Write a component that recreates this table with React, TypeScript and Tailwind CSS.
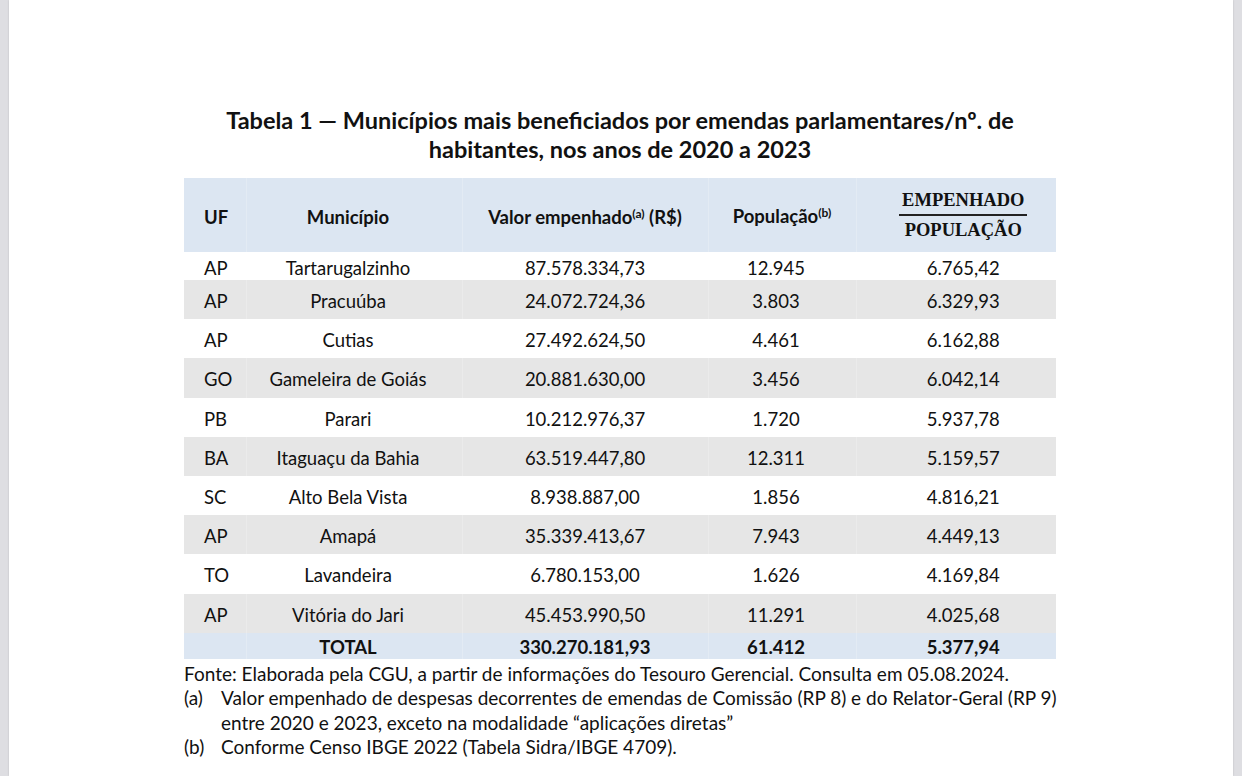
import React from "react";

const rows = [
  ["AP", "Tartarugalzinho", "87.578.334,73", "12.945", "6.765,42"],
  ["AP", "Pracuúba", "24.072.724,36", "3.803", "6.329,93"],
  ["AP", "Cutias", "27.492.624,50", "4.461", "6.162,88"],
  ["GO", "Gameleira de Goiás", "20.881.630,00", "3.456", "6.042,14"],
  ["PB", "Parari", "10.212.976,37", "1.720", "5.937,78"],
  ["BA", "Itaguaçu da Bahia", "63.519.447,80", "12.311", "5.159,57"],
  ["SC", "Alto Bela Vista", "8.938.887,00", "1.856", "4.816,21"],
  ["AP", "Amapá", "35.339.413,67", "7.943", "4.449,13"],
  ["TO", "Lavandeira", "6.780.153,00", "1.626", "4.169,84"],
  ["AP", "Vitória do Jari", "45.453.990,50", "11.291", "4.025,68"],
];

export default function App() {
  return (
    <div
      className="flex h-[776px] w-full bg-[#dedee2] px-[9px] text-[#111]"
      style={{ fontFamily: "Lato, 'Open Sans', sans-serif" }}
    >
      <div className="flex flex-1 flex-col bg-white pl-[175px] pt-[106px] shadow-[0_0_2px_rgba(0,0,0,0.15)]">
        <div className="flex w-[872px] flex-col">
          <h1 className="-mx-[20px] text-center text-[23.5px] font-bold leading-[29px]">
            Tabela 1 — Municípios mais beneficiados por emendas parlamentares/nº. de
            <br />
            habitantes, nos anos de 2020 a 2023
          </h1>
          <table className="mt-[14px] w-[872px] table-fixed border-collapse text-[18.5px] leading-[22px]">
            <colgroup>
              <col className="w-[62px]" />
              <col className="w-[216px]" />
              <col className="w-[246px]" />
              <col className="w-[148px]" />
              <col className="w-[200px]" />
            </colgroup>
            <thead>
              <tr className="h-[74px] bg-[#dce6f2]">
                <th className="pl-[20px] pt-[3px] text-left font-bold">UF</th>
                <th className="border-l border-white/20 pr-[12px] pt-[3px] text-center font-bold">Município</th>
                <th className="border-l border-white/20 pt-[3px] text-center font-bold">
                  Valor empenhado<sup className="text-[12px]">(a)</sup> (R$)
                </th>
                <th className="border-l border-white/20 pt-[1px] text-center align-middle font-bold">
                  População<sup className="text-[12px]">(b)</sup>
                </th>
                <th className="border-l border-white/20 pl-[14px]">
                  <div
                    className="mx-auto flex w-[128px] flex-col items-center text-[18.5px] font-bold"
                    style={{ fontFamily: "'Liberation Serif', 'DejaVu Serif', serif" }}
                  >
                    <span className="leading-[22px]">EMPENHADO</span>
                    <span className="my-[3px] h-[1.5px] w-full bg-[#222]" />
                    <span className="leading-[22px]">POPULAÇÃO</span>
                  </div>
                </th>
              </tr>
            </thead>
            <tbody>
              {rows.map((r, i) => (
                <tr
                  key={i}
                  className={
                    (i === 0 ? "h-[28px] " : "h-[39.2px] ") +
                    (i % 2 === 1 ? "bg-[#e6e6e6]" : "bg-white")
                  }
                >
                  <td className="pl-[20px] pt-[3px] text-left">{r[0]}</td>
                  <td className="border-l border-white/20 pr-[12px] pt-[3px] text-center">{r[1]}</td>
                  <td className="border-l border-white/20 pt-[3px] text-center">{r[2]}</td>
                  <td className="border-l border-white/20 pr-[12px] pt-[3px] text-center">{r[3]}</td>
                  <td className="border-l border-white/20 pl-[14px] pt-[3px] text-center">{r[4]}</td>
                </tr>
              ))}
              <tr className="h-[26px] bg-[#dce6f2] font-bold">
                <td></td>
                <td className="border-l border-white/20 pr-[12px] pt-[2px] text-center">TOTAL</td>
                <td className="border-l border-white/20 pt-[2px] text-center">330.270.181,93</td>
                <td className="border-l border-white/20 pr-[12px] pt-[2px] text-center">61.412</td>
                <td className="border-l border-white/20 pl-[14px] pt-[2px] text-center">5.377,94</td>
              </tr>
            </tbody>
          </table>
          <div className="w-[900px] text-[19px] leading-[24.5px]">
            <p className="mt-[3px]">
              Fonte: Elaborada pela CGU, a partir de informações do Tesouro Gerencial. Consulta em 05.08.2024.
            </p>
            <div className="flex">
              <span className="w-[37px] shrink-0">(a)</span>
              <span className="w-[850px]">
                Valor empenhado de despesas decorrentes de emendas de Comissão (RP 8) e do Relator-Geral (RP 9)
                entre 2020 e 2023, exceto na modalidade “aplicações diretas”
              </span>
            </div>
            <div className="flex">
              <span className="w-[37px] shrink-0">(b)</span>
              <span>Conforme Censo IBGE 2022 (Tabela Sidra/IBGE 4709).</span>
            </div>
          </div>
        </div>
      </div>
    </div>
  );
}
